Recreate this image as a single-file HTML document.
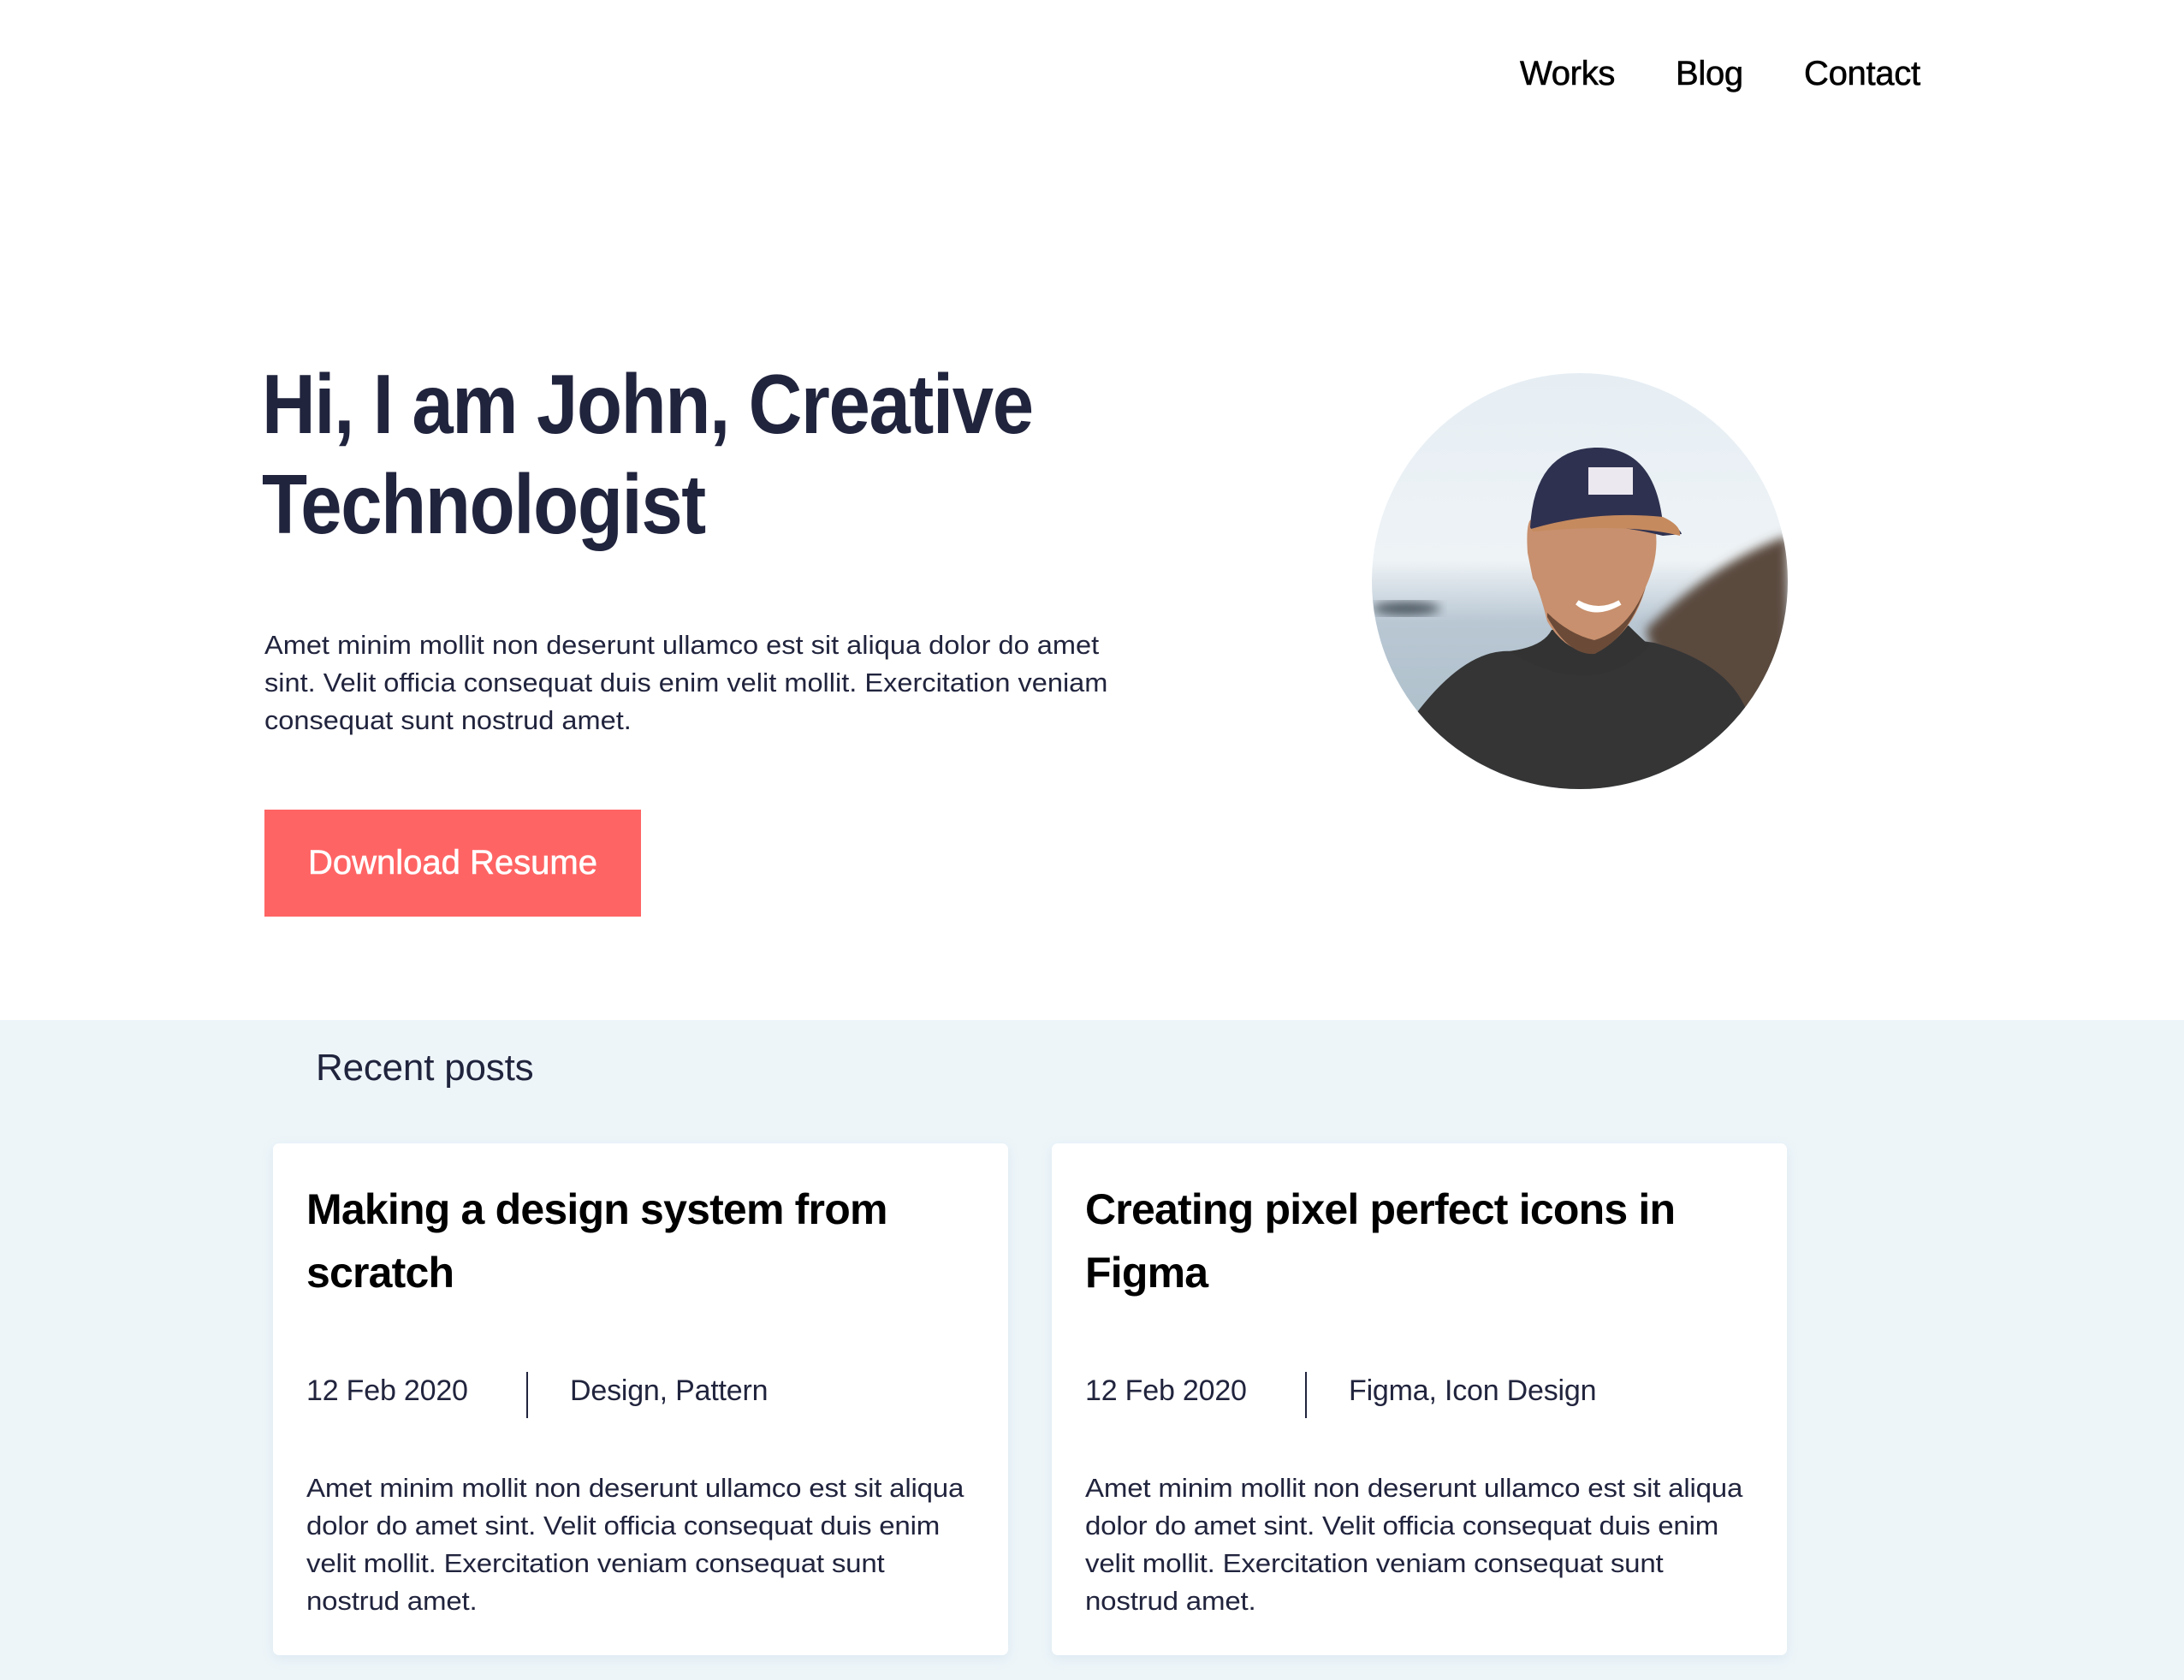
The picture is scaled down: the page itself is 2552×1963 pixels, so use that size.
<!DOCTYPE html>
<html><head><meta charset="utf-8"><style>
*{margin:0;padding:0;box-sizing:border-box}
body{width:2552px;height:1963px;position:relative;background:#fff;font-family:"Liberation Sans",Arial,sans-serif;overflow:hidden;color:#21243d}
.a{position:absolute;white-space:nowrap}
.nav{font-size:40px;color:#000;top:64px;letter-spacing:-0.3px;-webkit-text-stroke:0.6px #000}
h1{position:absolute;left:306px;top:414px;font-size:98px;line-height:117px;font-weight:bold;color:#21243d;letter-spacing:-1.5px;white-space:nowrap;transform:scaleX(0.886);transform-origin:0 0}
.p{position:absolute;left:309px;top:732px;font-size:31px;line-height:44px;color:#21243d;white-space:nowrap;transform:scaleX(1.05);transform-origin:0 0}
.btn{position:absolute;left:309px;top:946px;width:440px;height:125px;background:#ff6464;color:#fff;font-size:40px;line-height:125px;text-align:center;-webkit-text-stroke:0.6px #fff}
.sec{position:absolute;left:0;top:1192px;width:2552px;height:771px;background:#edf5f9}
.card{position:absolute;top:1336px;width:859px;height:598px;background:#fff;border-radius:7px;box-shadow:0 4px 12px rgba(170,200,220,0.25)}
.ct{position:absolute;left:39px;top:40px;font-size:50px;line-height:74px;font-weight:bold;color:#000;letter-spacing:-0.8px;width:780px}
.meta{position:absolute;top:270px;font-size:34px;color:#21243d;white-space:nowrap;letter-spacing:-0.2px}
.div{position:absolute;left:296px;top:267px;width:2px;height:54px;background:#21243d}
.cb{position:absolute;left:39px;top:381px;font-size:31px;line-height:44px;color:#21243d;white-space:nowrap;letter-spacing:-0.2px;transform:scaleX(1.067);transform-origin:0 0}
</style></head><body>
<div class="a nav" style="left:1776px">Works</div>
<div class="a nav" style="left:1958px">Blog</div>
<div class="a nav" style="left:2108px">Contact</div>
<h1>Hi, I am John, Creative<br>Technologist</h1>
<div class="p">Amet minim mollit non deserunt ullamco est sit aliqua dolor do amet<br>sint. Velit officia consequat duis enim velit mollit. Exercitation veniam<br>consequat sunt nostrud amet.</div>
<div class="btn">Download Resume</div>
<svg style="position:absolute;left:1603px;top:436px" width="486" height="486" viewBox="0 0 486 486">
<defs><clipPath id="c"><circle cx="243" cy="243" r="243"/></clipPath>
<linearGradient id="sky" x1="0" y1="0" x2="0" y2="1"><stop offset="0" stop-color="#e6eef4"/><stop offset="0.45" stop-color="#eef3f6"/><stop offset="0.6" stop-color="#b9c7d3"/><stop offset="1" stop-color="#a8bcc6"/></linearGradient>
<filter id="b"><feGaussianBlur stdDeviation="6"/></filter></defs>
<g clip-path="url(#c)">
<rect width="486" height="486" fill="url(#sky)"/>
<ellipse cx="40" cy="275" rx="40" ry="8" fill="#4c5660" filter="url(#b)"/>
<path d="M320 300 Q400 220 486 190 L486 420 L360 420Z" fill="#5a4a3e" filter="url(#b)"/>
<path d="M50 400 Q110 320 165 325 L230 310 Q260 330 295 310 L330 315 Q420 340 440 400 L470 486 L30 486Z" fill="#353536"/>
<path d="M160 325 Q200 320 210 300 L300 295 Q320 315 325 318 Q260 385 160 325Z" fill="#333"/>
<path d="M182 210 Q178 150 200 180 L215 160 Q260 150 330 175 Q338 210 320 250 Q305 305 260 328 Q225 325 205 290 Q195 250 188 240Z" fill="#c8906e"/>
<path d="M205 285 Q230 330 260 328 Q300 310 320 250 Q300 300 260 312 Q230 305 205 280Z" fill="#6b4a38"/>
<path d="M240 268 Q260 285 290 268 Q265 282 240 268Z" fill="#fff" stroke="#fff" stroke-width="6"/>
<path d="M185 180 Q190 90 260 87 Q330 85 340 175 Q360 180 362 188 L340 190 Q260 170 186 182Z" fill="#2f3150"/>
<path d="M186 182 Q260 160 340 168 Q362 178 360 190 Q300 175 188 185Z" fill="#c58a5e"/>
<rect x="253" y="110" width="52" height="32" fill="#ece8f0"/>
</g></svg>
<div class="sec"></div>
<div class="a" style="left:369px;top:1223px;font-size:44px;color:#21243d;letter-spacing:-0.2px">Recent posts</div>
<div class="card" style="left:319px">
<div class="ct">Making a design system from scratch</div>
<div class="meta" style="left:39px">12 Feb 2020</div><div class="div"></div>
<div class="meta" style="left:347px">Design, Pattern</div>
<div class="cb">Amet minim mollit non deserunt ullamco est sit aliqua<br>dolor do amet sint. Velit officia consequat duis enim<br>velit mollit. Exercitation veniam consequat sunt<br>nostrud amet.</div>
</div>
<div class="card" style="left:1229px">
<div class="ct">Creating pixel perfect icons in Figma</div>
<div class="meta" style="left:39px">12 Feb 2020</div><div class="div"></div>
<div class="meta" style="left:347px">Figma, Icon Design</div>
<div class="cb">Amet minim mollit non deserunt ullamco est sit aliqua<br>dolor do amet sint. Velit officia consequat duis enim<br>velit mollit. Exercitation veniam consequat sunt<br>nostrud amet.</div>
</div>
</body></html>
